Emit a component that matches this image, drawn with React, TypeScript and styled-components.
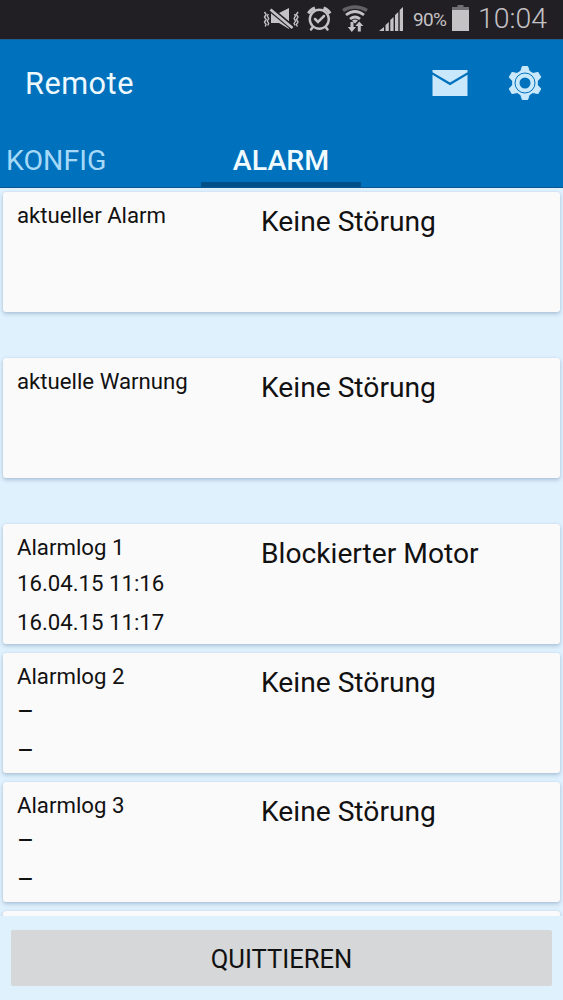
import React from 'react';
import styled, { createGlobalStyle } from 'styled-components';

const GlobalStyle = createGlobalStyle`
  * { box-sizing: border-box; }
  body { margin: 0; background: #e0f1fe; font-family: Roboto, "Liberation Sans", sans-serif; }
`;

const Screen = styled.div`
  width: 563px;
  height: 1000px;
  display: flex;
  flex-direction: column;
  overflow: hidden;
  background: #e0f1fe;
`;

const StatusBar = styled.div`
  height: 39px;
  flex: none;
  display: flex;
  background: #221f24;
  color: #c4c2c5;
  padding-left: 262px;
  white-space: nowrap;
`;

const StatusIcons = styled.svg`
  flex: none;
  width: 151px;
  height: 39px;
`;

const BatteryLevel = styled.span`
  width: 38px;
  font-size: 19px;
  line-height: 40px;
  letter-spacing: -0.65px;
`;

const BatteryIcon = styled.svg`
  flex: none;
  width: 20px;
  height: 39px;
`;

const Clock = styled.span`
  margin-left: 7px;
  font-size: 28.4px;
  font-weight: 300;
  line-height: 38px;
`;

const Header = styled.header`
  height: 149px;
  flex: none;
  display: flex;
  flex-direction: column;
  background: #0071bc;
  border-top: 1px solid #1c5f92;
  border-bottom: 1px solid #0b568c;
`;

const ActionBar = styled.div`
  height: 89px;
  display: flex;
  align-items: center;
  padding: 0 20px 3px 25px;
`;

const Title = styled.h1`
  flex: 1;
  margin: 0;
  padding-top: 2px;
  font-size: 30.7px;
  font-weight: 400;
  line-height: 36px;
  letter-spacing: 0.5px;
  color: #edf9ff;
`;

const ActionIcon = styled.svg<{ $gap?: number }>`
  width: 36px;
  height: 36px;
  margin-left: ${p => p.$gap ?? 0}px;
`;

const Tabs = styled.nav`
  flex: 1;
  display: flex;
`;

const Tab = styled.div<{ $active?: boolean; $width: number }>`
  width: ${p => p.$width}px;
  padding: 14px 0 0 ${p => (p.$active ? 0 : 6)}px;
  text-align: ${p => (p.$active ? 'center' : 'left')};
  font-size: 28.5px;
  line-height: 36px;
  font-weight: ${p => (p.$active ? 500 : 400)};
  color: ${p => (p.$active ? '#f1fbff' : '#a6d9f8')};
  border-bottom: ${p => (p.$active ? '5px solid #00508a' : '0')};
  margin-right: ${p => (p.$active ? 0 : 41)}px;
`;

const Log = styled.main`
  height: 728px;
  flex: none;
  overflow: hidden;
  display: flex;
  flex-direction: column;
  padding: 4px 3px 0;
`;

const Card = styled.section<{ $gap: number }>`
  height: 120px;
  flex: none;
  display: flex;
  margin-bottom: ${p => p.$gap}px;
  padding-left: 14px;
  border-radius: 3px;
  background: #fbfafb;
  box-shadow: 0 2px 4px rgba(60, 100, 135, 0.32), 0 0 2px rgba(80, 125, 160, 0.12);
  color: #111;
`;

const Details = styled.div`
  width: 244px;
  padding-top: 9px;
  font-size: 22.2px;
  line-height: 28px;
`;

const Stamp = styled.div<{ $first?: boolean; $empty?: boolean }>`
  height: 28px;
  margin-top: ${p => (p.$first ? 8 : 11)}px;
  font-size: ${p => (p.$empty ? 26 : 22.2)}px;
  line-height: ${p => (p.$empty ? 26 : 28)}px;
`;

const Message = styled.div`
  padding-top: 12px;
  font-size: 28.2px;
  line-height: 36px;
`;

const Footer = styled.footer`
  flex: 1;
  padding: 14px 11px;
`;

const Button = styled.button`
  display: block;
  width: 541px;
  height: 56px;
  padding: 2px 0 0;
  border: 0;
  border-radius: 2px;
  background: #d6d7d8;
  color: #111;
  font: 400 25.6px/54px Roboto, "Liberation Sans", sans-serif;
`;

type Entry = { label: string; message: string; stamps?: string[]; gap: number };

const entries: Entry[] = [
  { label: 'aktueller Alarm', message: 'Keine Störung', gap: 46 },
  { label: 'aktuelle Warnung', message: 'Keine Störung', gap: 46 },
  { label: 'Alarmlog 1', message: 'Blockierter Motor', stamps: ['16.04.15 11:16', '16.04.15 11:17'], gap: 9 },
  { label: 'Alarmlog 2', message: 'Keine Störung', stamps: ['–', '–'], gap: 9 },
  { label: 'Alarmlog 3', message: 'Keine Störung', stamps: ['–', '–'], gap: 9 },
  { label: '', message: '', gap: 0 },
];

const tooth = 'M-2.7 -16.5H2.7L4.8 -10H-4.8Z';

export default function App() {
  return (
    <Screen>
      <GlobalStyle />
      <StatusBar>
        <StatusIcons viewBox="262 0 151 39">
          <g fill="none" stroke="#c4c2c5" strokeWidth="1.4">
            <path d="M264.5 12l1.6 2.5-1.6 2.5 1.6 2.5-1.6 2.5 1.6 2.5-1 2M268.3 14l-1 2 1.4 2.5-1.4 2.5 1.4 2.5-1 2" />
            <path d="M298 12l-1.6 2.5 1.6 2.5-1.6 2.5 1.6 2.5-1.6 2.5 1 2M294.5 14l1 2-1.4 2.5 1.4 2.5-1.4 2.5 1 2" />
          </g>
          <path fill="#c4c2c5" d="M271 13h8l10-5v21l-10-6h-8z" />
          <path stroke="#221f24" strokeWidth="5.5" d="M270 9l23 19" />
          <path stroke="#c4c2c5" strokeWidth="2.8" d="M270.5 9.5l22 18.5" />
          <g fill="none" stroke="#c4c2c5" strokeLinecap="round">
            <circle cx="319.3" cy="19.3" r="9.5" strokeWidth="2.4" />
            <path strokeWidth="2.5" d="M315 19l3 3 6-6M312.5 27.5l-1.5 2M326 27.5l1.5 2" />
            <path strokeWidth="3.2" strokeLinecap="butt" d="M308.5 13.5q2-4 6.5-5.5M330 13.5q-2-4-6.5-5.5" />
          </g>
          <g fill="none" strokeWidth="2.8">
            <path stroke="#626064" strokeWidth="3.5" d="M343 10.5q12-7 24 0" />
            <path stroke="#c4c2c5" d="M346 15q9-7 18 0M350 19q5-4 10 0" />
          </g>
          <path fill="#c4c2c5" d="M352 20.5q3-2 6 0l-3 3zM350.5 22h3v5h2.5l-4.2 5-4-5h2.7zM357.8 31.5h3v-5.5h2.5l-4-4.5-4 4.5h2.5z" />
          <path fill="#c4c2c5" d="M379 31l5-4v4zM385.5 25l3.3-3v9h-3.3zM390.3 20l3.3-3v14h-3.3zM395 15l3.3-3v19H395zM399.7 10l3.3-3V31h-3.3z" />
        </StatusIcons>
        <BatteryLevel>90%</BatteryLevel>
        <BatteryIcon viewBox="451 0 20 39">
          <path fill="#716f73" d="M457.5 5h6v2h5.5v4h-17V7h5.5z" />
          <path fill="#c4c2c5" d="M452 10h17v21h-17z" />
        </BatteryIcon>
        <Clock>10:04</Clock>
      </StatusBar>
      <Header>
        <ActionBar>
          <Title>Remote</Title>
          <ActionIcon viewBox="0 0 36 36">
            <path fill="#cae8fb" d="M.5 5h35v2.2L18 17.4.5 7.2zM.5 9.8L18 20.2 35.5 9.8V31H.5z" />
          </ActionIcon>
          <ActionIcon $gap={39} viewBox="-18 -18 36 36">
            <g fill="#cae8fb" stroke="#cae8fb" strokeWidth="1" strokeLinejoin="round">
              {[0, 60, 120, 180, 240, 300].map(a => <path key={a} d={tooth} transform={`rotate(${a})`} />)}
              <circle r="12.4" />
            </g>
            <circle r="10" fill="none" stroke="#0071bc" strokeWidth="1" />
            <circle r="5.5" fill="#0071bc" />
          </ActionIcon>
        </ActionBar>
        <Tabs>
          <Tab $width={160}>KONFIG</Tab>
          <Tab $active $width={160}>ALARM</Tab>
        </Tabs>
      </Header>
      <Log>
        {entries.map((e, i) => (
          <Card key={i} $gap={e.gap}>
            <Details>
              <div>{e.label}</div>
              {e.stamps?.map((s, j) => <Stamp key={j} $first={j === 0} $empty={s === '–'}>{s}</Stamp>)}
            </Details>
            <Message>{e.message}</Message>
          </Card>
        ))}
      </Log>
      <Footer>
        <Button>QUITTIEREN</Button>
      </Footer>
    </Screen>
  );
}
